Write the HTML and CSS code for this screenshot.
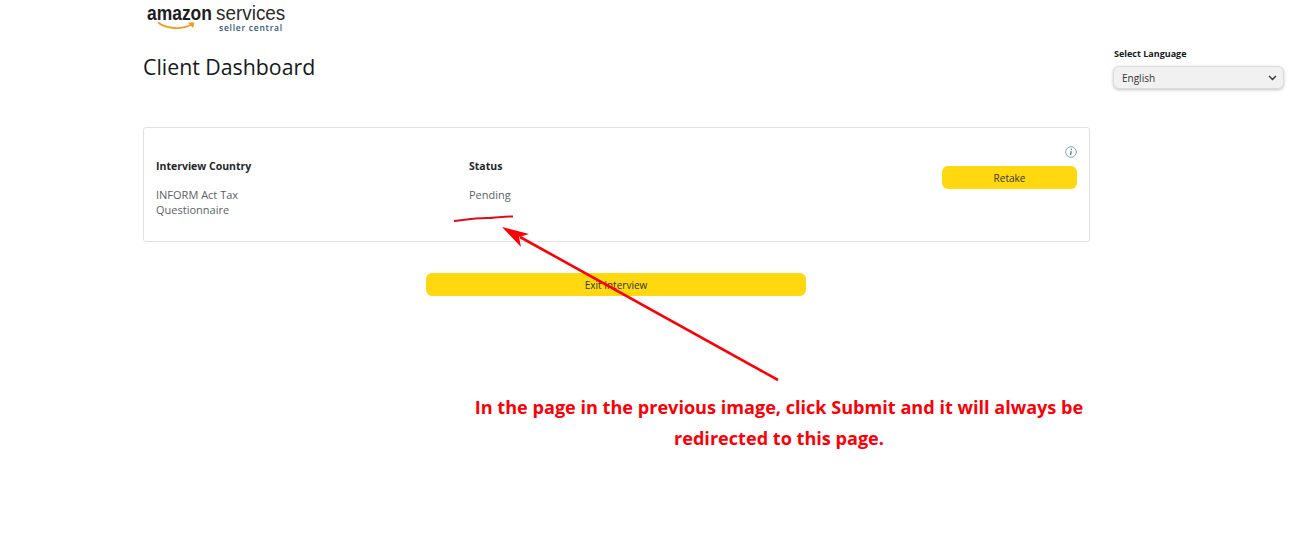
FILE: index.html
```html
<!DOCTYPE html>
<html lang="en">
<head>
  <meta charset="UTF-8" />
  <title>Client Dashboard</title>
  <link rel="stylesheet" href="styles.css">
</head>
<body>
  <div class="page">
    <main class="main">
      <!-- Logo -->
      <div class="logo">
        <div class="logo-top"><span class="logo-amazon">amazon</span><span class="logo-services">services</span></div>
        <div class="logo-sub">seller central</div>
        <svg class="logo-smile" width="40" height="10" viewBox="0 0 40 10">
          <path d="M1 1.5 C10 8 24 9 35 3.5" fill="none" stroke="#f09a1f" stroke-width="1.8"/>
          <path d="M31 1.5 L37.5 1.5 L36 7 Z" fill="#f09a1f"/>
        </svg>
      </div>

      <h1 class="title">Client Dashboard</h1>

      <!-- Interview card -->
      <section class="card">
        <div class="col col-country">
          <div class="col-head">Interview Country</div>
          <div class="col-value">INFORM Act Tax<br>Questionnaire</div>
        </div>
        <div class="col col-status">
          <div class="col-head">Status</div>
          <div class="col-value">Pending</div>
        </div>
        <div class="col-action">
          <svg class="info" width="12" height="12" viewBox="0 0 12 12">
            <circle cx="6" cy="6" r="5.3" fill="none" stroke="#7fa8c4" stroke-width="1"/>
            <path d="M6.5 2.6 L6.2 3.9 M6.2 5.2 L5.5 9.2" fill="none" stroke="#3f7da6" stroke-width="1.3"/>
          </svg>
          <button class="btn btn-retake">Retake</button>
        </div>
      </section>

      <div class="exit-row">
        <button class="btn btn-exit">Exit Interview</button>
      </div>
    </main>

    <aside class="lang">
      <label class="lang-label">Select Language</label>
      <div class="lang-select">
        <span>English</span>
        <svg width="9" height="6" viewBox="0 0 10 7">
          <path d="M1 1.2 L5 5.2 L9 1.2" fill="none" stroke="#333" stroke-width="1.6"/>
        </svg>
      </div>
    </aside>
  </div>

  <!-- Red annotation drawn over the page -->
  <svg class="markup" width="1300" height="536" viewBox="0 0 1300 536">
    <path d="M454 221 C470 219 476 218 486 218 C496 218 504 216 513 216.5" fill="none" stroke="#d9101c" stroke-width="2"/>
    <path d="M778 380 L520 237" fill="none" stroke="#fb0007" stroke-width="2.6"/>
    <path d="M502 227 L529 234 L519 237 L521 247 Z" fill="#fb0007"/>
  </svg>
  <p class="note">In the page in the previous image, click Submit and it will always be<br>redirected to this page.</p>
</body>
</html>
```

FILE: styles.css
```css
* {
  margin: 0;
  padding: 0;
  box-sizing: border-box;
}

html, body {
  height: 100%;
  overflow: hidden;
}

body {
  position: relative;
  background: #fff;
  color: #111;
  font-family: "Open Sans", "Noto Sans", sans-serif;
}

.page {
  display: flex;
  align-items: flex-start;
  padding-left: 143px;
}

.main {
  width: 947px;
}

/* logo */
.logo {
  position: relative;
  width: 146px;
  height: 34px;
  margin-left: 4px;
  padding-top: 3px;
}

.logo-top {
  display: flex;
  align-items: baseline;
  line-height: 20px;
  white-space: nowrap;
  color: #1d1d1f;
}

/* no narrow face installed, so the wordmark is squeezed */
.logo-amazon {
  display: block;
  width: 69px;
  font: 700 21px/20px "Liberation Sans", sans-serif;
  transform: scaleX(0.83);
  transform-origin: left;
}

.logo-services {
  display: block;
  width: 70px;
  font: 400 21px/20px "Liberation Sans", sans-serif;
  transform: scaleX(0.9);
  transform-origin: left;
  color: #2a2a2c;
}

.logo-sub {
  position: absolute;
  top: 23px;
  left: 72px;
  font: 600 8.5px/10px "Open Sans", sans-serif;
  letter-spacing: 0.75px;
  color: #2f5478;
  white-space: nowrap;
}

.logo-smile {
  position: absolute;
  top: 21px;
  left: 10px;
}

.title {
  margin-top: 19px;
  font-size: 21.3px;
  font-weight: 400;
  line-height: 27px;
  color: #16191c;
}

/* card */
.card {
  display: flex;
  height: 115px;
  margin-top: 47px;
  padding: 0 12px;
  border: 1px solid #e2e2e2;
  border-radius: 3px;
}

.col {
  padding-top: 31px;
  font-size: 11px;
}

.col-country {
  width: 313px;
}

.col-status {
  width: 473px;
}

.col-head {
  font-size: 10.5px;
  font-weight: 700;
  line-height: 15px;
  color: #22262a;
}

.col-value {
  margin-top: 13px;
  line-height: 15px;
  color: #5c6166;
}

.col-action {
  display: flex;
  flex-direction: column;
  align-items: flex-end;
  width: 135px;
  padding-top: 18px;
}

.info {
  margin-bottom: 8px;
}

.btn {
  display: block;
  border: none;
  border-radius: 6px;
  background: #ffd810;
  color: #333;
  font-family: inherit;
  font-size: 10px;
  text-align: center;
}

.btn-retake {
  width: 135px;
  height: 23px;
}

.exit-row {
  margin-top: 31px;
  padding-left: 283px;
}

.btn-exit {
  width: 380px;
  height: 23px;
}

/* language picker */
.lang {
  width: 171px;
  margin-left: 23px;
  padding-top: 47px;
}

.lang-label {
  display: block;
  padding-left: 1px;
  font-size: 9px;
  font-weight: 700;
  line-height: 13px;
  color: #16191c;
}

.lang-select {
  display: flex;
  align-items: center;
  justify-content: space-between;
  height: 23px;
  margin-top: 6px;
  padding: 0 6px 0 8px;
  border: 1px solid #dcdcdc;
  border-radius: 6px;
  background: #f1f1f1;
  box-shadow: 0 1px 3px rgba(15, 17, 17, 0.25);
  font-size: 10px;
  color: #333;
}

/* annotation */
.markup {
  position: absolute;
  top: 0;
  left: 0;
}

.note {
  position: absolute;
  top: 392px;
  left: 429px;
  width: 700px;
  font-size: 18.1px;
  font-weight: 700;
  line-height: 31px;
  text-align: center;
  color: #fb0007;
}
```
